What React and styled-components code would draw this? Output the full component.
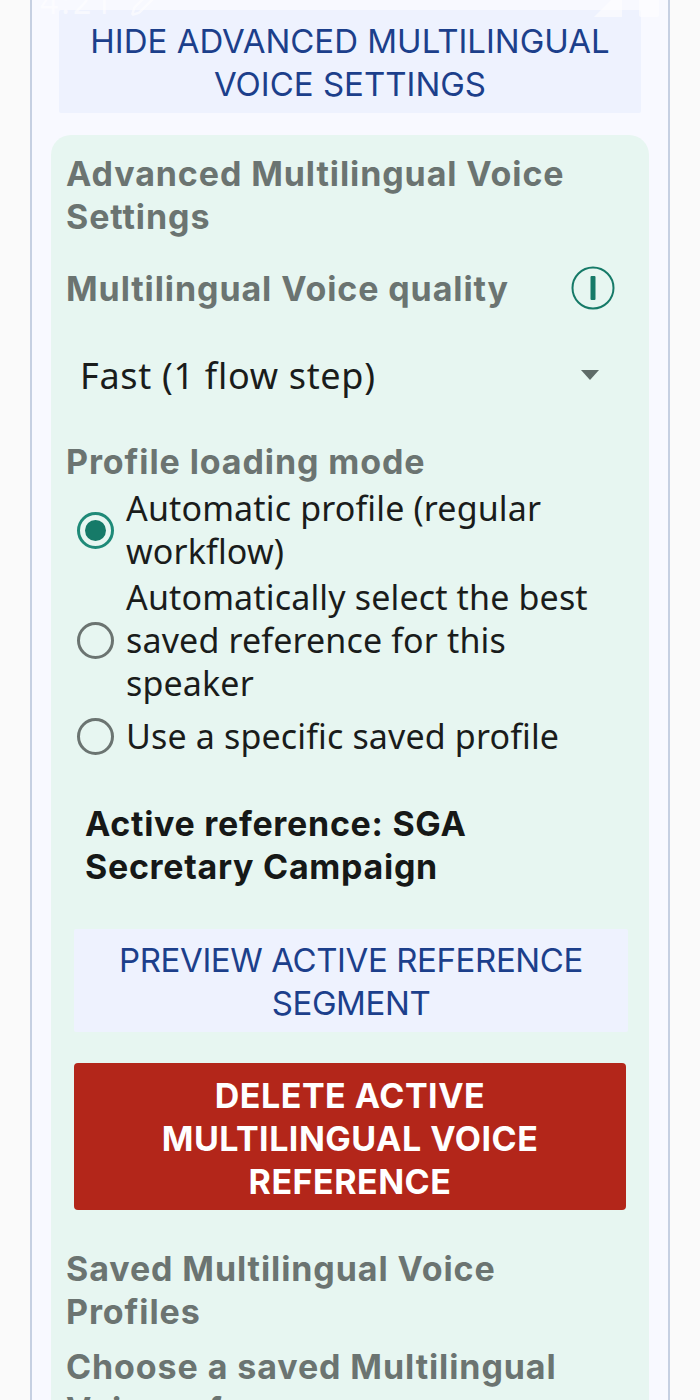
import React from "react";
import styled, { createGlobalStyle } from "styled-components";
import { Pencil } from "lucide-react";

const Global = createGlobalStyle`
  html, body { margin: 0; padding: 0; background: #fafafa; }
  #root { width: 700px; height: 1400px; overflow: hidden; }
  * { box-sizing: border-box; }
`;

const Page = styled.div`
  position: relative;
  width: 700px;
  height: 1400px;
  overflow: hidden;
  padding: 0 30px;
  font-family: "Noto Sans", sans-serif;
`;

const Panel = styled.main`
  height: 1400px;
  background: #f8f9ff;
  border-left: 2px solid #c6d0e2;
  border-right: 2px solid #c6d0e2;
  padding: 10px 27px 0;
`;

const StatusBar = styled.div`
  position: absolute;
  top: -20px;
  left: 40px;
  right: 40px;
  display: flex;
  justify-content: space-between;
  align-items: center;
  color: #ffffff;
  opacity: 0.6;
  font-size: 32px;
  letter-spacing: 3px;
`;

const StatusGroup = styled.div`
  display: flex;
  align-items: center;
  gap: 14px;
`;

const SoftButton = styled.button`
  display: block;
  border: 0;
  border-radius: 2px;
  background: #eef2fe;
  color: #1c3f8b;
  font-family: "Inter", sans-serif;
  font-size: 33px;
  font-weight: 400;
  letter-spacing: ${(p) => p.$spacing || 0}px;
  line-height: 43px;
  text-align: center;
  text-transform: uppercase;
  padding: 10px 20px 7px;
  width: ${(p) => p.$width}px;
  margin: ${(p) => p.$margin || 0};
`;

const Card = styled.section`
  margin: 22px -8px 0;
  background: #e7f6f1;
  border-radius: 20px;
  padding: 17px 15px 0;
  height: 1400px;
`;

const Heading = styled.h2`
  margin: ${(p) => p.$margin || 0};
  color: #6b7471;
  font-family: "Inter", sans-serif;
  font-size: 34px;
  font-weight: 700;
  letter-spacing: 0.9px;
  line-height: 43px;
`;

const QualityRow = styled.div`
  display: flex;
  align-items: center;
  justify-content: space-between;
  margin-top: 28px;
  padding-right: 19px;
`;

const InfoIcon = styled.svg`
  width: 44px;
  height: 44px;
  flex: none;
`;

const SelectRow = styled.div`
  display: flex;
  align-items: center;
  justify-content: space-between;
  height: 130px;
  padding: 0 35px 0 14px;
  color: #1a1c1b;
  font-size: 36px;
  letter-spacing: 0.7px;
`;

const Caret = styled.span`
  width: 0;
  height: 0;
  border-left: 9px solid transparent;
  border-right: 9px solid transparent;
  border-top: 10px solid #5f6b68;
`;

const RadioGroup = styled.div`
  display: flex;
  flex-direction: column;
  margin: 0 0 0 11px;
  padding-right: 20px;
`;

const RadioRow = styled.label`
  display: flex;
  align-items: center;
  gap: 12px;
  margin-top: ${(p) => p.$top || 0}px;
  color: #1a1c1b;
  font-size: 34px;
  letter-spacing: 0.15px;
  line-height: 43px;
`;

const RadioMark = styled.span`
  flex: none;
  width: 37px;
  height: 37px;
  border-radius: 50%;
  border: 3px solid ${(p) => (p.$on ? "#1f8a78" : "#6b7471")};
  display: flex;
  align-items: center;
  justify-content: center;
  &::after {
    content: "";
    display: ${(p) => (p.$on ? "block" : "none")};
    width: 21px;
    height: 21px;
    border-radius: 50%;
    background: #167a68;
  }
`;

const Active = styled.p`
  margin: 44px 30px 0 19px;
  color: #161817;
  font-family: "Inter", sans-serif;
  font-size: 34px;
  font-weight: 700;
  letter-spacing: 0.7px;
  line-height: 43px;
`;

const DangerButton = styled.button`
  display: block;
  width: 552px;
  margin: 31px 0 0 8px;
  border: 0;
  border-radius: 4px;
  background: #b3261a;
  color: #ffffff;
  font-family: "Inter", sans-serif;
  font-size: 34px;
  font-weight: 700;
  letter-spacing: 0.5px;
  line-height: 43px;
  text-align: center;
  text-transform: uppercase;
  padding: 11px 40px 7px;
`;

export default function App() {
  return (
    <Page>
      <Global />
      <Panel>
        <SoftButton $width={582}>Hide advanced Multilingual Voice settings</SoftButton>
        <Card>
          <Heading>Advanced Multilingual Voice Settings</Heading>
          <QualityRow>
            <Heading>Multilingual Voice quality</Heading>
            <InfoIcon viewBox="0 0 44 44" aria-label="info">
              <circle cx="22" cy="22" r="20.5" fill="none" stroke="#167a68" strokeWidth="2" />
              <rect x="19.5" y="10" width="5" height="24" rx="1" fill="#167a68" />
            </InfoIcon>
          </QualityRow>
          <SelectRow>
            <span>Fast (1 flow step)</span>
            <Caret />
          </SelectRow>
          <Heading>Profile loading mode</Heading>
          <RadioGroup>
            <RadioRow $top={4}><RadioMark $on /><span>Automatic profile (regular workflow)</span></RadioRow>
            <RadioRow $top={3}><RadioMark /><span>Automatically select the best saved reference for this speaker</span></RadioRow>
            <RadioRow $top={10}><RadioMark /><span>Use a specific saved profile</span></RadioRow>
          </RadioGroup>
          <Active>Active reference: SGA Secretary Campaign</Active>
          <SoftButton $width={554} $spacing={-0.4} $margin="41px 0 0 8px">Preview active reference segment</SoftButton>
          <DangerButton>Delete active Multilingual Voice reference</DangerButton>
          <Heading $margin="37px 0 0">Saved Multilingual Voice Profiles</Heading>
          <Heading $margin="12px 0 0">Choose a saved Multilingual Voice reference</Heading>
        </Card>
      </Panel>
      <StatusBar>
        <StatusGroup><span>4:21</span><Pencil size={30} /></StatusGroup>
        <StatusGroup>
          <svg width="34" height="34" viewBox="0 0 34 34" aria-hidden="true"><path d="M32 4v28H4z" fill="#fff" /></svg>
          <svg width="22" height="34" viewBox="0 0 22 34" aria-hidden="true"><rect x="1" y="2" width="20" height="30" rx="2" fill="#fff" /></svg>
        </StatusGroup>
      </StatusBar>
    </Page>
  );
}
